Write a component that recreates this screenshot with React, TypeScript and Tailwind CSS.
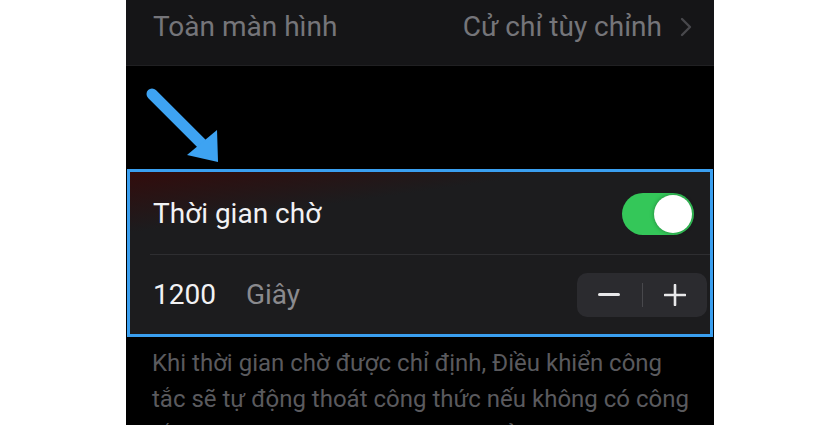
import React from "react";

function Toggle() {
  return (
    <div className="flex h-[42px] w-[72px] items-center justify-end rounded-full bg-[#34c759] p-[2px]">
      <div className="h-[38px] w-[38px] rounded-full bg-white shadow-[0_0_4px_rgba(0,0,0,0.35)]" />
    </div>
  );
}

function Stepper() {
  return (
    <div className="flex h-[44px] w-[130px] items-center rounded-[10px] bg-[#2b2b2f]">
      <div className="flex flex-1 items-center justify-center">
        <span className="h-[3px] w-[22px] rounded bg-[#e8e8ea]" />
      </div>
      <span className="h-[24px] w-px bg-[#48484c]" />
      <div className="flex flex-1 items-center justify-center">
        <svg width="22" height="22" viewBox="0 0 22 22">
          <path d="M11 1v20M1 11h20" stroke="#e8e8ea" strokeWidth="2.6" strokeLinecap="round" />
        </svg>
      </div>
    </div>
  );
}

function Arrow() {
  return (
    <svg className="absolute left-[20px] top-[22px]" width="100" height="80" viewBox="0 0 100 80">
      <path d="M6 6 L58 58" stroke="#3ea3f2" strokeWidth="11" strokeLinecap="round" />
      <polygon points="41,67 71,42 72,74" fill="#3ea3f2" />
    </svg>
  );
}

export default function App() {
  return (
    <div className="flex h-[425px] w-[840px] justify-center bg-white" style={{ fontFamily: "Roboto, 'Noto Sans', sans-serif" }}>
      <div className="flex h-[425px] w-[588px] flex-col overflow-hidden bg-black">
        <div className="flex h-[66px] shrink-0 items-start justify-between border-b border-[#202022] bg-[#151517] pl-[27px] pr-[22px] pt-[6px] text-[28px] text-[#75757a]">
          <span>Toàn màn hình</span>
          <span className="flex items-center gap-[18px]">
            Cử chỉ tùy chỉnh
            <svg width="12" height="20" viewBox="0 0 12 20">
              <path d="M2 2l8 8-8 8" fill="none" stroke="#48484c" strokeWidth="2.4" strokeLinecap="round" strokeLinejoin="round" />
            </svg>
          </span>
        </div>
        <div className="relative h-[103px] shrink-0">
          <Arrow />
        </div>
        <div className="ml-[1px] w-[586px] shrink-0 border-[3px] border-[#3a9ff0]">
          <div className="bg-[#1c1c1e] bg-[linear-gradient(172deg,#320c0c_0px,#1c1c1e_60px)]">
            <div className="flex h-[82px] items-center justify-between pl-[23px] pr-[16px] pt-[2px]">
              <span className="text-[28px] text-[#f2f2f4]">Thời gian chờ</span>
              <Toggle />
            </div>
            <div className="ml-[20px] h-px bg-[#2e2e31]" />
            <div className="flex h-[79px] items-center justify-between pl-[23px] pr-[3px]">
              <span className="flex items-baseline gap-[30px] text-[28px]">
                <span className="text-[#f2f2f4]">1200</span>
                <span className="text-[#8a8a8e]">Giây</span>
              </span>
              <Stepper />
            </div>
          </div>
        </div>
        <p className="pl-[26px] pt-[8px] text-[24px] leading-[36px] text-[#5a5a5e]">
          Khi thời gian chờ được chỉ định, Điều khiển công
          <br />
          tắc sẽ tự động thoát công thức nếu không có công
          <br />
          tắc nào được kích hoạt trong khoảng thời gian chờ.
        </p>
      </div>
    </div>
  );
}
